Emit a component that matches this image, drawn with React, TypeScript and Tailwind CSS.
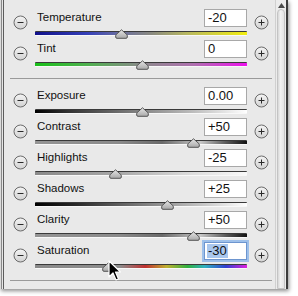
import React from 'react';

type Row = { label: string; value: string; pos: number; track: string; active?: boolean };

const top: Row[] = [
  { label: 'Temperature', value: '-20', pos: 121, track: 'bg-[linear-gradient(to_right,#10108a,#3540b8_25%,#6a6ea0_40%,#8a8a80_55%,#b8b860_72%,#f2ee10_100%)]' },
  { label: 'Tint', value: '0', pos: 142, track: 'bg-[linear-gradient(to_right,#18c018,#50b050_25%,#8a8a8a_50%,#b070b0_75%,#ee10ee_100%)]' },
];

const bottom: Row[] = [
  { label: 'Exposure', value: '0.00', pos: 142, track: 'bg-[linear-gradient(to_right,#000,#303030_15%,#7a7a7a_45%,#bdbdbd_75%,#fff_100%)]' },
  { label: 'Contrast', value: '+50', pos: 193, track: 'bg-[linear-gradient(to_right,#959595,#8a8a8a_40%,#6a6a6a_60%,#c8c8c8_78%,#5a5a5a_90%,#111_100%)]' },
  { label: 'Highlights', value: '-25', pos: 115, track: 'bg-[linear-gradient(to_right,#8a8a8a,#a8a8a8_40%,#d8d8d8_70%,#fafafa_100%)]' },
  { label: 'Shadows', value: '+25', pos: 167, track: 'bg-[linear-gradient(to_right,#000,#2a2a2a_20%,#7a7a7a_50%,#c8c8c8_80%,#fff_100%)]' },
  { label: 'Clarity', value: '+50', pos: 193, track: 'bg-[linear-gradient(to_right,#959595,#8a8a8a_40%,#6a6a6a_60%,#c8c8c8_78%,#5a5a5a_90%,#111_100%)]' },
  { label: 'Saturation', value: '-30', pos: 108, active: true, track: 'bg-[linear-gradient(to_right,#8a8a8a,#8c8c8c_40%,#c03030_52%,#c0b030_62%,#30b040_72%,#30b0c0_80%,#3040d0_90%,#e020e0_100%)]' },
];

function RoundBtn({ plus }: { plus?: boolean }) {
  return (
    <svg width="15" height="15" viewBox="0 0 15 15" className="shrink-0">
      <defs>
        <linearGradient id={plus ? 'gp' : 'gm'} x1="0" y1="0" x2="0" y2="1">
          <stop offset="0" stopColor="#f4f4f4" />
          <stop offset="1" stopColor="#d2d2d2" />
        </linearGradient>
      </defs>
      <circle cx="7.5" cy="7.5" r="6.5" fill={`url(#${plus ? 'gp' : 'gm'})`} stroke="#6a6a6a" />
      <path d="M4.5 7.5h6" stroke="#2a2a2a" strokeWidth="1" />
      {plus && <path d="M7.5 4.5v6" stroke="#2a2a2a" strokeWidth="1" />}
    </svg>
  );
}

function Thumb() {
  return (
    <svg width="13" height="10" viewBox="0 0 13 10">
      <defs>
        <linearGradient id="gt" x1="0" y1="0" x2="0" y2="1">
          <stop offset="0" stopColor="#e6e6e6" />
          <stop offset="1" stopColor="#a8a8a8" />
        </linearGradient>
      </defs>
      <path d="M6.5 0.8 L11.8 5.5 Q12.3 6 12.3 7 L12.3 8 Q12.3 9.3 11 9.3 L2 9.3 Q0.7 9.3 0.7 8 L0.7 7 Q0.7 6 1.2 5.5 Z" fill="url(#gt)" stroke="#555" strokeWidth="1" />
    </svg>
  );
}

function Cursor() {
  return (
    <svg width="14" height="22" viewBox="0 0 14 22">
      <path d="M1 1 L1 17 L5 13 L8 20 L10.5 19 L7.5 12 L12.5 12 Z" fill="#000" stroke="#fff" strokeWidth="1.2" strokeLinejoin="round" />
    </svg>
  );
}

function SliderRow({ r }: { r: Row }) {
  return (
    <div className="flex items-center h-[31px] pl-[9px]">
      <div className="mt-[2px]"><RoundBtn /></div>
      <div className="ml-[7px] w-[212px] flex flex-col">
        <div className="flex items-center justify-between h-[18px] mt-[1px]">
          <span className="ml-[2px] text-[11.5px] text-[#111] leading-none">{r.label}</span>
          {r.active ? (
            <div className="w-[43px] h-[18px] border border-[#6d95cf] bg-white shadow-[0_0_0_2px_#9ec0ea] flex items-center pl-[2px]">
              <span className="bg-[#a9c7ee] text-[13px] leading-[14px] text-[#111] pr-[1px] pl-[1px]">-30</span>
            </div>
          ) : (
            <div className="w-[43px] h-[18px] border border-[#a8a8a8] bg-white flex items-center pl-[3px]">
              <span className="text-[13px] leading-none text-[#111]">{r.value}</span>
            </div>
          )}
        </div>
        <div className={`relative mt-[4px] h-[5px] rounded-[1px] border-t border-[#3a3a3a] border-b border-b-[#f8f8f8] ${r.track}`}>
          <div className="absolute top-[-3px]" style={{ left: r.pos - 35 - 6 }}><Thumb /></div>
          {r.active && (
            <div className="absolute top-[-5px]" style={{ left: r.pos - 35 }}><Cursor /></div>
          )}
        </div>
      </div>
      <div className="ml-[7px] mt-[2px]"><RoundBtn plus /></div>
    </div>
  );
}

export default function App() {
  return (
    <div className="w-[298px] h-[296px] bg-white font-['Liberation_Sans',Arial,sans-serif] relative overflow-hidden">
      <div className="flex h-[289px] w-[288px] shadow-[1px_2px_4px_rgba(0,0,0,0.45)]">
        <div className="w-[4px] flex">
          <div className="w-[1px] bg-[#dcdcdc]" />
          <div className="w-[1px] bg-[#8a8a8a]" />
          <div className="w-[1px] bg-[#e6e6e6]" />
          <div className="w-[1px] bg-[#5c5c5c]" />
        </div>
        <div className="w-[271px] bg-[#e9e9e9] flex flex-col pt-[6px]">
          {top.map((r) => <SliderRow key={r.label} r={r} />)}
          <div className="ml-[6px] w-[262px] h-px bg-[#9a9a9a] mt-[10px] mb-[5px]" />
          {bottom.map((r) => <SliderRow key={r.label} r={r} />)}
          <div className="ml-[6px] w-[262px] h-px bg-[#9a9a9a] mt-[10px]" />
        </div>
        <div className="w-[11px] bg-[#ececec] border-l border-[#d0d0d0] flex flex-col">
          <div className="h-[9px] flex items-start justify-center pt-[3px]">
            <svg width="7" height="5" viewBox="0 0 7 5"><path d="M3.5 0 L7 5 L0 5 Z" fill="#4a4a4a" /></svg>
          </div>
          <div className="flex-1 mx-[1px] rounded-t-[4px] bg-[linear-gradient(to_right,#d6d6d6,#f2f2f2_40%,#e4e4e4)] border border-[#c4c4c4]" />
        </div>
        <div className="w-[2px] bg-[#3c3c3c]" />
      </div>
    </div>
  );
}
